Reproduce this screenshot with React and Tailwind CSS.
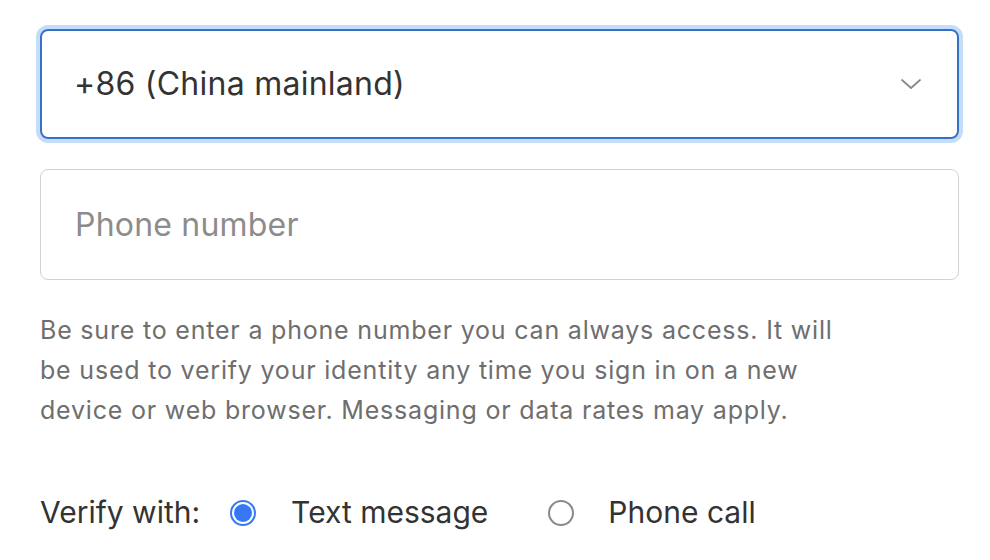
import React from "react"

const font = { fontFamily: "Inter, 'Noto Sans', sans-serif" }

const Radio = ({ checked }) =>
    checked ? (
        <span className="flex h-[26px] w-[26px] items-center justify-center rounded-full border-[2px] border-[#3478f6] bg-white">
            <span className="h-[18px] w-[18px] rounded-full bg-[#3478f6]" />
        </span>
    ) : (
        <span className="block h-[26px] w-[26px] rounded-full border-[2px] border-[#8a8a8a] bg-white" />
    )

const App = () => {
    return (
        <div className="min-h-[560px] w-[990px] bg-white pl-[40px] pr-[31px] pt-[29px]" style={font}>
            <div className="flex h-[110px] items-center justify-between rounded-[8px] border-[2px] border-[#3571c8] pl-[32px] pr-[35px] shadow-[0_0_0_4px_#c6ddf9]">
                <span className="text-[32px] tracking-[0.25px] text-[#333333]">+86 (China mainland)</span>
                <svg width="22" height="14" viewBox="0 0 22 14" fill="none">
                    <path d="M2 3l9 8 9-8" stroke="#8a8a8a" strokeWidth="1.8" strokeLinecap="round" strokeLinejoin="round" />
                </svg>
            </div>

            <div className="mt-[30px] flex h-[111px] items-center rounded-[8px] border border-[#d2d2d2] pl-[34px]">
                <span className="text-[32px] tracking-[0.2px] text-[#8c8c8c]">Phone number</span>
            </div>

            <p className="mt-[30px] text-[25px] leading-[40px] tracking-[0.8px] text-[#6e6e6e]">
                <span className="block">Be sure to enter a phone number you can always access. It will</span>
                <span className="block">be used to verify your identity any time you sign in on a new</span>
                <span className="block">device or web browser. Messaging or data rates may apply.</span>
            </p>

            <div className="mt-[60px] flex items-center text-[30px] text-[#333333]">
                <span>Verify with:</span>
                <span className="ml-[30px]"><Radio checked /></span>
                <span className="ml-[35px]">Text message</span>
                <span className="ml-[60px]"><Radio /></span>
                <span className="ml-[34px]">Phone call</span>
            </div>
        </div>
    )
}

export default App
